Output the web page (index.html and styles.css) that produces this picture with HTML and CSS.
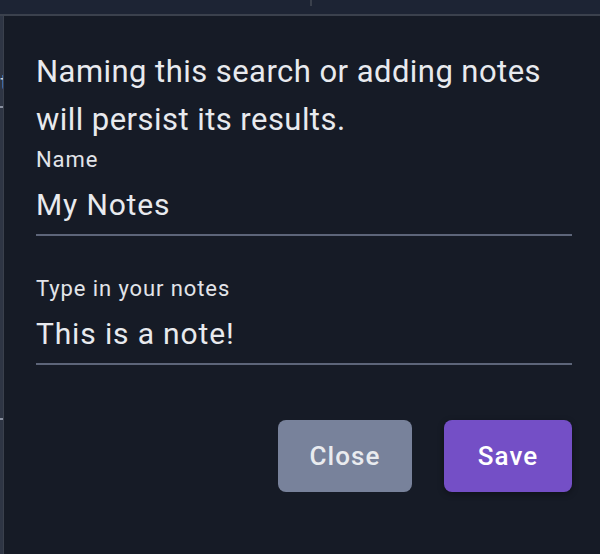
FILE: index.html
```html
<!DOCTYPE html>
<html lang="en">
<head>
<meta charset="utf-8">
<title>Save search</title>
<link rel="stylesheet" href="styles.css">
</head>
<body>
<div class="page">
  <div class="topbar"><span class="tick"></span></div>
  <div class="divider"></div>
  <div class="main">
    <div class="sidebar">
      <span class="side-glyph">t</span>
      <span class="side-mark side-mark-1"></span>
      <span class="side-mark side-mark-2"></span>
    </div>
    <div class="modal">
      <p class="intro">Naming this search or adding notes will persist its results.</p>
      <label class="field">
        <span class="field-label">Name</span>
        <input class="field-input" type="text" value="My Notes">
      </label>
      <label class="field field-notes">
        <span class="field-label">Type in your notes</span>
        <input class="field-input" type="text" value="This is a note!">
      </label>
      <div class="actions">
        <button class="btn btn-close" type="button">Close</button>
        <button class="btn btn-save" type="button">Save</button>
      </div>
    </div>
  </div>
</div>
</body>
</html>
```
FILE: styles.css
```css
* { box-sizing: border-box; }
html, body { margin: 0; height: 100%; }
body {
  background: #1d2434;
  font-family: Roboto, "Noto Sans", sans-serif;
  color: #e6e8ec;
  overflow: hidden;
}
.page { display: flex; flex-direction: column; height: 100%; }
.topbar { height: 14px; display: flex; background: #1d2434; }
.tick { width: 2px; height: 6px; margin-left: 310px; background: #3a404c; }
.divider { height: 2px; background: #3b414d; }
.main { flex: 1; display: flex; }
.sidebar {
  width: 3px;
  background: #2e3544;
  display: flex;
  flex-direction: column;
  overflow: hidden;
  position: relative;
}
.side-glyph {
  position: absolute;
  top: 56px;
  right: 0;
  font-size: 22px;
  line-height: 1;
  color: #c9ccd3;
  transform: translateX(65%);
}
.side-mark { position: absolute; left: 0; width: 3px; height: 2px; background: #8a90a0; }
.side-mark-1 { top: 90px; }
.side-mark-2 { top: 402px; }
.modal {
  flex: 1;
  background: #161b26;
  border-left: 1px solid #3a404c;
  padding: 32px 0 0 32px;
  margin-right: -4px;
  padding-right: 32px;
}
.intro {
  margin: 0;
  font-size: 31px;
  line-height: 48px;
  letter-spacing: 0.45px;
  color: #e8eaee;
}
.field { display: flex; flex-direction: column; }
.field-label {
  font-size: 22px;
  line-height: 31px;
  letter-spacing: 0.9px;
  color: #e2e4e9;
}
.field-input {
  height: 61px;
  padding: 0;
  border: 0;
  border-bottom: 2px solid #5d6579;
  background: transparent;
  color: #e8eaee;
  font-family: Roboto, "Noto Sans", sans-serif;
  font-size: 30px;
  letter-spacing: 0.85px;
  outline: none;
}
.field-notes { margin-top: 37px; }
.actions {
  display: flex;
  justify-content: flex-end;
  gap: 32px;
  margin-top: 55px;
}
.btn {
  height: 72px;
  border: 0;
  border-radius: 8px;
  padding: 0;
  font-family: Roboto, "Noto Sans", sans-serif;
  font-size: 26px;
  font-weight: 500;
  letter-spacing: 1.1px;
}
.btn-close { background: #78829b; color: #e9ebef; width: 134px; }
.btn-save {
  background: #744fc6;
  color: #ffffff;
  width: 128px;
  box-shadow: 0 2px 6px rgba(0, 0, 0, 0.35);
}
```
